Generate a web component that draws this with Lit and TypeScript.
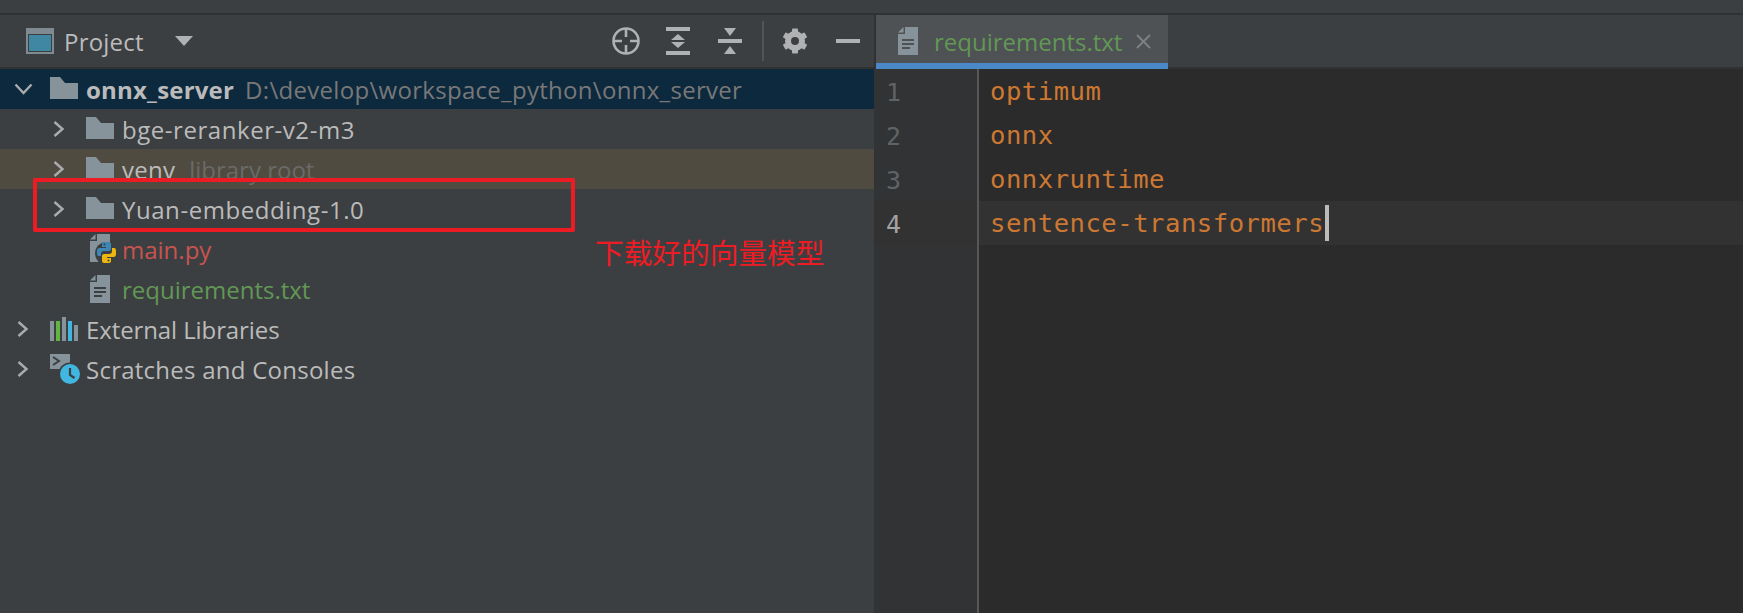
import { LitElement, html, css, svg } from "lit";
import { customElement } from "lit/decorators.js";

const chevR = svg`<svg class="chev" width="24" height="20" viewBox="0 0 24 20"><path d="M8.5 3 L16.5 10 L8.5 17" fill="none" stroke="#a9abad" stroke-width="2.4"/></svg>`;
const chevD = svg`<svg class="chev" width="24" height="20" viewBox="0 0 24 20"><path d="M5.5 5.5 L13.5 14 L21.5 5.5" fill="none" stroke="#a9abad" stroke-width="2.4"/></svg>`;
const folder = svg`<svg class="ic fo" width="28" height="22" viewBox="0 0 28 22"><path d="M0 0 H10 L15 6 H28 V22 H0 Z" fill="#87939a"/></svg>`;
const fileShape = svg`<path d="M7 0 H20 V28 H0 V7 H7 Z M0 5.5 L5.5 0 V5.5 Z" fill="#87939a" fill-rule="nonzero"/>`;
const fileTxt = svg`<svg width="20" height="28" viewBox="0 0 20 28">${fileShape}<g fill="#3c3f41"><rect x="4" y="12" width="12" height="2"/><rect x="4" y="16" width="12" height="2"/><rect x="4" y="20" width="8" height="2"/></g></svg>`;
const fileTxtTab = svg`<svg width="20" height="28" viewBox="0 0 20 28">${fileShape}<g fill="#4e5254"><rect x="4" y="12" width="12" height="2"/><rect x="4" y="16" width="12" height="2"/><rect x="4" y="20" width="8" height="2"/></g></svg>`;
const filePy = svg`<svg width="28" height="30" viewBox="0 0 28 30" style="overflow:visible">
  <path d="M7 0 H20 V28 H0 V7 H7 Z M0 5.5 L5.5 0 V5.5 Z" fill="#87939a"/>
  <circle cx="16.5" cy="19.5" r="11.5" fill="#3c3f41"/>
  <path d="M12 10 Q12 8 15 8 H19 Q21 8 21 10 V15 Q21 17 19 17 H14 Q11 17 11 20 V22 H8.5 Q7 22 7 19.5 V17 Q7 14 9.5 14 H16 V13 H12 Z" fill="#3c87b5"/>
  <path d="M21 27 Q21 29 18 29 H14 Q12 29 12 27 V22 Q12 20 14 20 H19 Q22 20 22 17 V14 H24.5 Q26 14 26 16.5 V20 Q26 23 23.5 23 H17 V24 H21 Z" fill="#eeb70f"/>
  <circle cx="14.5" cy="10.5" r="1" fill="#3c3f41"/><circle cx="18.5" cy="26.5" r="1" fill="#3c3f41"/></svg>`;
const libs = svg`<svg class="ic" width="28" height="24" viewBox="0 0 28 24">
  <rect x="0" y="4" width="4" height="20" fill="#87939a"/><rect x="6" y="4" width="4" height="20" fill="#62b543"/>
  <rect x="12" y="0" width="4" height="24" fill="#87939a"/><rect x="18" y="4" width="4" height="20" fill="#40b6e0"/>
  <rect x="24" y="8" width="4" height="16" fill="#87939a"/></svg>`;
const scratch = svg`<svg class="ic sc" width="30" height="30" viewBox="0 0 30 30" style="overflow:visible">
  <path d="M0 0 H20 V15 H0 Z" fill="#87939a"/><path d="M3 3 L9 7 L3 11" fill="none" stroke="#3c3f41" stroke-width="2"/>
  <circle cx="20" cy="20" r="11.5" fill="#3c3f41"/><circle cx="20" cy="20" r="10" fill="#40b6e0"/>
  <path d="M20 14 V21 L24.5 24" fill="none" stroke="#3c3f41" stroke-width="2.2"/></svg>`;

const gearTeeth = [0, 60, 120, 180, 240, 300];

@customElement("app-root")
export class AppRoot extends LitElement {
  static styles = css`
    :host { display: block; width: 1743px; height: 613px; background: #3c3f41; overflow: hidden; position: relative;
      font-family: "Open Sans", "Noto Sans", sans-serif; color: #bbbbbb; }
    .top { height: 13px; background: #3c3f41; border-bottom: 2px solid #2f3133; }
    .main { display: flex; height: 598px; }
    .left { width: 874px; display: flex; flex-direction: column; }
    .head { height: 52px; border-bottom: 2px solid #323232; display: flex; align-items: center; padding-left: 26px; }
    .title { font-size: 24px; letter-spacing: 0.2px; margin-left: 10px; color: #bbbbbb; line-height: 52px; width: 111px; padding-top: 2px; }
    .drop { margin-right: auto; }
    .tools { display: flex; align-items: center; margin-right: 14px; height: 52px; }
    .tools svg { display: block; flex: none; }
    .t1 { margin-right: 26px; }
    .t2 { margin-right: 28px; }
    .t3 { margin-right: 20px; }
    .sep { width: 2px; height: 40px; background: #515355; margin-right: 18px; }
    .t4 { margin-right: 28px; }
    .row { height: 40px; display: flex; align-items: center; font-size: 24px; white-space: pre; flex: none; }
    .l0 { padding-left: 10px; }
    .l1 { padding-left: 46px; }
    .l2 { padding-left: 90px; }
    .chev { flex: none; margin-right: 16px; margin-bottom: 1px; display: block; }
    .ic { flex: none; margin-right: 8px; display: block; }
    .fo { margin-bottom: 2px; }
    .sc { margin-right: 6px; }
    .filei { width: 32px; flex: none; display: flex; }
    .sel { background: #0d293e; }
    .ex { background: #4f4b41; }
    .bold { font-weight: 700; letter-spacing: 0.2px; }
    .wide { letter-spacing: 0.55px; }
    .mid { letter-spacing: 0.25px; }
    .tight { letter-spacing: -0.1px; }
    .dim { color: #787878; margin-left: 11px; letter-spacing: 0.3px; }
    .dim2 { color: #6a6a66; margin-left: 14px; }
    .red { color: #c75450; }
    .green { color: #629755; }
    .right { flex: 1; display: flex; flex-direction: column; min-width: 0; }
    .tabs { height: 52px; border-bottom: 2px solid #323232; display: flex; padding-left: 2px; box-shadow: inset 2px 0 0 #323232; }
    .tab { width: 270px; height: 44px; padding-top: 4px; background: #4e5254; border-bottom: 6px solid #4a88c7; display: flex; align-items: center; padding-left: 22px; margin-bottom: -2px; flex: none; }
    .tabname { font-size: 24px; color: #629755; margin-left: 16px; }
    .x { margin-left: 14px; display: block; }
    .edit { flex: 1; display: flex; background: #2b2b2b; min-height: 0; }
    .gutter { width: 103px; background: #313335; border-right: 2px solid #555759; flex: none; }
    .num { height: 42px; padding-top: 2px; padding-left: 12px; font: 25px/44px "DejaVu Sans Mono", monospace; color: #606366; letter-spacing: -0.5px; }
    .num.cur { color: #a4a3a3; background: #323232; }
    .code { flex: 1; }
    .ln { height: 44px; padding-left: 11px; font: 25.6px/44px "DejaVu Sans Mono", monospace; letter-spacing: 0.5px; color: #cc7832; white-space: pre; display: flex; align-items: center; }
    .ln.cur { background: #323232; }
    .caret { width: 4px; height: 36px; background: #bbbbbb; flex: none; margin-left: 1px; }
    .box { position: absolute; left: 33px; top: 178px; width: 542px; height: 54px; box-sizing: border-box; border: 4px solid #ed1c24; border-radius: 2px; }
    .note { position: absolute; left: 595px; top: 232px; font: 28.7px/40px "Noto Sans CJK SC", sans-serif; color: #ed1c24; white-space: nowrap; }
  `;

  render() {
    return html`
      <div class="top"></div>
      <div class="main">
        <div class="left">
          <div class="head">
            <svg width="28" height="26" viewBox="0 0 28 26"><rect width="28" height="26" fill="#7f8b91"/><rect x="2" y="6" width="24" height="18" fill="#3c3f41"/><rect x="3" y="7" width="22" height="16" fill="#3f87a3"/></svg>
            <span class="title">Project</span>
            <svg class="drop" width="18" height="10" viewBox="0 0 18 10"><path d="M0 0 H18 L9 10 Z" fill="#afb1b3"/></svg>
            <div class="tools">
              <svg class="t1" width="28" height="28" viewBox="0 0 28 28"><circle cx="14" cy="14" r="12.5" fill="none" stroke="#afb1b3" stroke-width="2.6"/><path d="M14 1 V10 M14 18 V27 M1 14 H10 M18 14 H27" stroke="#afb1b3" stroke-width="2.6"/></svg>
              <svg class="t2" width="24" height="28" viewBox="0 0 24 28"><g fill="#afb1b3"><rect width="24" height="4"/><rect y="24" width="24" height="4"/><path d="M12 7 L19 13 H5 Z M12 21 L5 15 H19 Z"/></g></svg>
              <svg class="t3" width="24" height="28" viewBox="0 0 24 28"><g fill="#afb1b3"><rect y="12" width="24" height="4"/><path d="M6 1 H18 L12 9 Z M12 19 L18 27 H6 Z"/></g></svg>
              <div class="sep"></div>
              <svg class="t4" width="26" height="26" viewBox="0 0 26 26"><g fill="#afb1b3">${gearTeeth.map((a) => svg`<rect x="10" y="0.5" width="6" height="6" rx="1" transform="rotate(${a} 13 13)"/>`)}</g><circle cx="13" cy="13" r="7" fill="none" stroke="#afb1b3" stroke-width="6"/></svg>
              <svg width="24" height="4" viewBox="0 0 24 4"><rect width="24" height="4" fill="#afb1b3"/></svg>
            </div>
          </div>
          <div class="row l0 sel">${chevD}${folder}<span class="bold">onnx_server</span><span class="dim">D:\\develop\\workspace_python\\onnx_server</span></div>
          <div class="row l1">${chevR}${folder}<span class="wide">bge-reranker-v2-m3</span></div>
          <div class="row l1 ex">${chevR}${folder}<span class="mid">venv</span><span class="dim2">library root</span></div>
          <div class="row l1">${chevR}${folder}<span class="wide">Yuan-embedding-1.0</span></div>
          <div class="row l2"><span class="filei">${filePy}</span><span class="red">main.py</span></div>
          <div class="row l2"><span class="filei">${fileTxt}</span><span class="green">requirements.txt</span></div>
          <div class="row l0">${chevR}${libs}<span class="tight">External Libraries</span></div>
          <div class="row l0">${chevR}${scratch}<span class="mid">Scratches and Consoles</span></div>
        </div>
        <div class="right">
          <div class="tabs">
            <div class="tab">
              ${fileTxtTab}
              <span class="tabname">requirements.txt</span>
              <svg class="x" width="15" height="15" viewBox="0 0 15 15"><path d="M1 1 L14 14 M14 1 L1 14" stroke="#7f8183" stroke-width="1.8"/></svg>
            </div>
          </div>
          <div class="edit">
            <div class="gutter">
              <div class="num">1</div><div class="num">2</div><div class="num">3</div><div class="num cur">4</div>
            </div>
            <div class="code">
              <div class="ln">optimum</div>
              <div class="ln">onnx</div>
              <div class="ln">onnxruntime</div>
              <div class="ln cur">sentence-transformers<span class="caret"></span></div>
            </div>
          </div>
        </div>
      </div>
      <div class="box"></div>
      <div class="note">下载好的向量模型</div>
    `;
  }
}
